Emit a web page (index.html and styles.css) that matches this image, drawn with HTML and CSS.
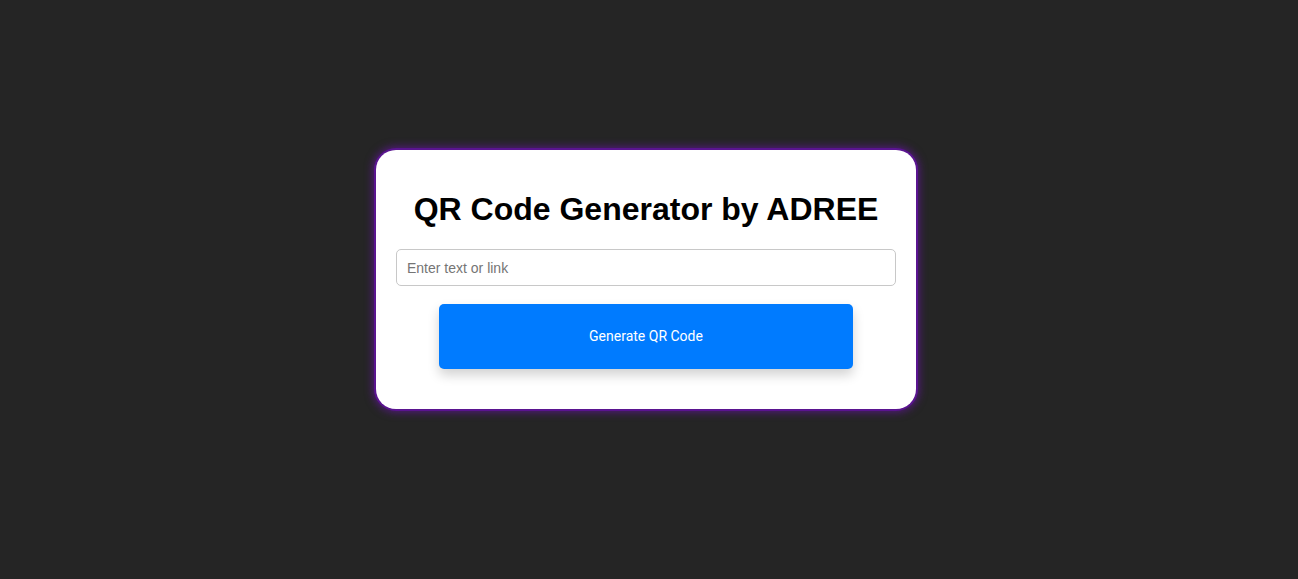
FILE: index.html
```html
<!DOCTYPE html>
<html lang="en">
<head>
<meta charset="utf-8">
<title>QR Code Generator</title>
<link rel="stylesheet" href="styles.css">
</head>
<body>
<main class="page">
  <section class="card">
    <h1 class="title">QR Code Generator by ADREE</h1>
    <input class="text-input" type="text" placeholder="Enter text or link">
    <button class="generate-btn" type="button">Generate QR Code</button>
  </section>
</main>
</body>
</html>
```

FILE: styles.css
```css
html, body {
  margin: 0;
  padding: 0;
  height: 100%;
}
body {
  background: #252525;
  font-family: "Liberation Sans", Arial, sans-serif;
}
.page {
  min-height: 100%;
  display: flex;
  justify-content: center;
  padding: 150px 6px 0 0;
  box-sizing: border-box;
}
.card {
  width: 540px;
  height: 259px;
  box-sizing: border-box;
  background: #ffffff;
  border-radius: 20px;
  padding: 20px;
  display: flex;
  flex-direction: column;
  align-items: center;
  align-self: flex-start;
  box-shadow: 0 0 0 2px #5a1490, 0 0 8px 3px rgba(106, 20, 170, 0.7);
}
.title {
  margin: 21px 0 21px;
  font-size: 32px;
  font-weight: bold;
  color: #000;
  line-height: 37px;
}
.text-input {
  width: 500px;
  height: 37px;
  box-sizing: border-box;
  border: 1px solid #c8c8c8;
  border-radius: 5px;
  padding: 0 10px;
  font-family: "Liberation Sans", Arial, sans-serif;
  font-size: 14px;
  color: #333;
  outline: none;
}
.text-input::placeholder {
  color: #757575;
}
.generate-btn {
  margin-top: 18px;
  width: 414px;
  height: 65px;
  border: none;
  border-radius: 5px;
  background: #007bff;
  color: #ffffff;
  font-family: Roboto, "Liberation Sans", sans-serif;
  font-size: 14px;
  line-height: 16px;
  padding: 0 0 2px;
  box-shadow: 0 6px 12px rgba(0, 0, 0, 0.18);
  cursor: pointer;
}
```
